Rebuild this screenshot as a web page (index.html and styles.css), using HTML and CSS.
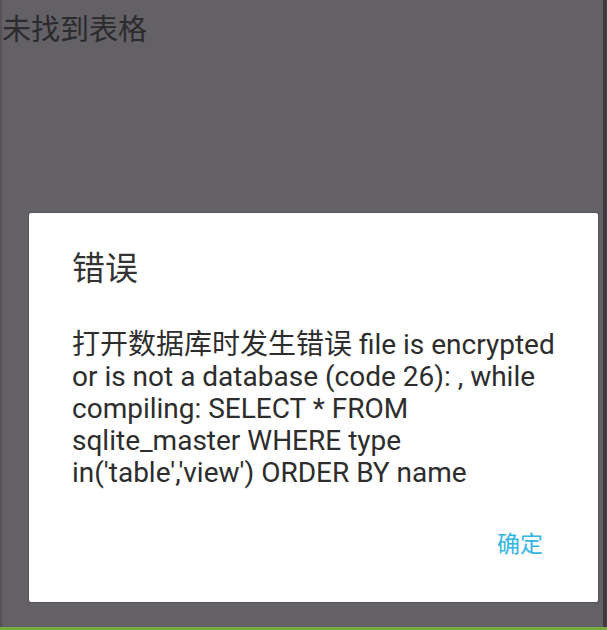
FILE: index.html
```html
<!DOCTYPE html>
<html lang="zh-CN">
<head>
    <meta charset="UTF-8">
    <meta name="viewport" content="width=device-width, initial-scale=1.0">
    <title>未找到表格</title>
    <link rel="stylesheet" href="styles.css">
</head>
<body>
    <div class="screen">
        <div class="edge-left"></div>
        <div class="content">
            <h1 class="page-title">未找到表格</h1>

            <div class="dialog">
                <h2 class="dialog-title">错误</h2>
                <p class="dialog-message">打开数据库时发生错误 file is encrypted or is not a database (code 26): , while compiling: SELECT * FROM sqlite_master WHERE type in('table','view') ORDER BY name</p>
                <div class="dialog-actions">
                    <button class="ok-btn">确定</button>
                </div>
            </div>
        </div>
        <div class="edge-right"></div>
    </div>
    <div class="bottom-bar"></div>
</body>
</html>
```

FILE: styles.css
```css
body {
    margin: 0;
    font-family: Roboto, "Noto Sans CJK SC", sans-serif;
    background: #636165;
    width: 607px;
    height: 630px;
    overflow: hidden;
}

.screen {
    display: flex;
    height: 627px;
}

.edge-left {
    width: 2px;
    background: #555357;
}

.edge-right {
    width: 4px;
    background: #3c3b3e;
}

.content {
    flex: 1;
}

.page-title {
    margin: 0;
    font-size: 29px;
    font-weight: normal;
    line-height: 60px;
    color: #2b2a2d;
}

.dialog {
    margin: 153px 0 0 27px;
    width: 569px;
    height: 389px;
    box-sizing: border-box;
    background: #fff;
    border-radius: 2px;
    box-shadow: 0 0 1px 1px rgba(0, 0, 0, 0.15);
    padding: 30px 30px 0 43px;
    display: flex;
    flex-direction: column;
}

.dialog-title {
    margin: 0;
    font-size: 33px;
    font-weight: normal;
    line-height: 52px;
    color: #333;
}

.dialog-message {
    margin: 34px 0 0 0;
    font-size: 28px;
    line-height: 32px;
    color: #2d2d2d;
}

.dialog-actions {
    display: flex;
    justify-content: flex-end;
    margin-top: 36px;
}

.ok-btn {
    background: none;
    border: none;
    padding: 0 25px 0 0;
    font-family: inherit;
    font-size: 23px;
    color: #33b5e5;
    cursor: pointer;
}

.bottom-bar {
    height: 3px;
    background: #72ad45;
}
```
